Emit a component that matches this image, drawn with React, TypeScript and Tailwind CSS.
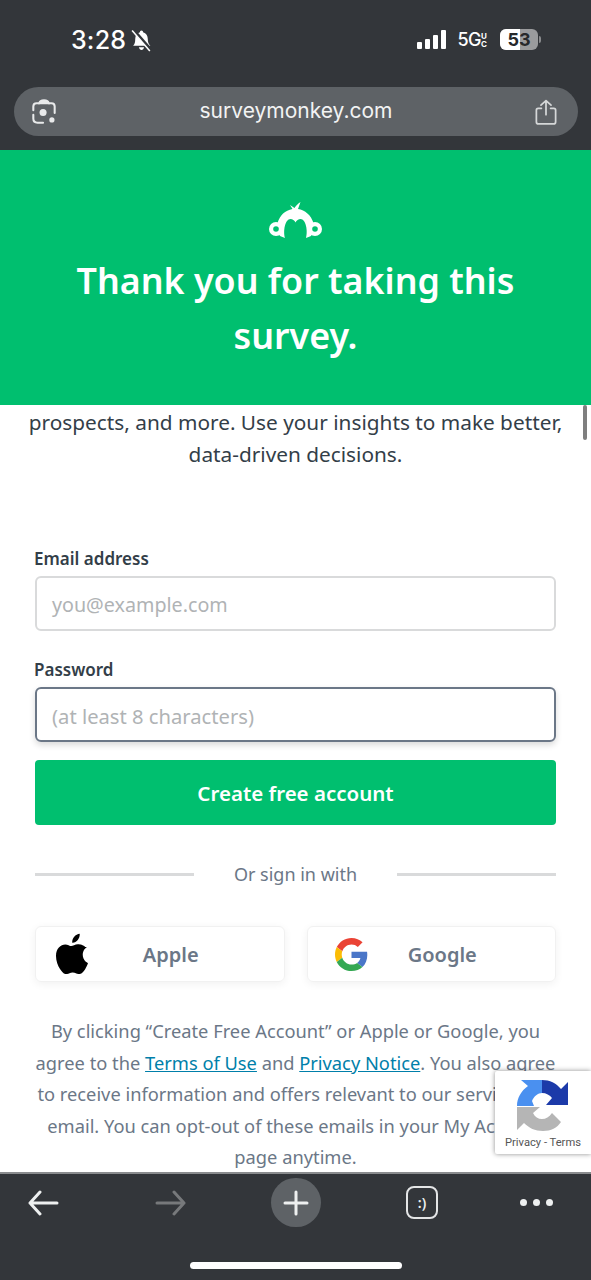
const font = { fontFamily: '"Noto Sans", sans-serif' };

function Monkey() {
  return (
    <svg width="54" height="36" viewBox="0 0 54 36" fill="white">
      <path d="M21 3 L25.500 6 C27 3.500 29 1.500 31.500 0 L29 7 C36 8 42 13 44.500 21 L46 27 L42 34 L37 36 C39 29 37 17 31.500 17 C29.500 17 27.500 18.500 26.500 20.500 C25.500 18.500 23.500 17 21.500 17 C16 17 14 29 16 36 L11 34 L7 27 L8.500 21 C11 13 16 8.500 23.500 7 Z" />
      <circle cx="7" cy="27" r="7" />
      <circle cx="46" cy="27" r="7" />
      <circle cx="7" cy="27" r="2.800" fill="#00bf6f" />
      <circle cx="46" cy="27" r="2.800" fill="#00bf6f" />
    </svg>
  );
}

function Apple() {
  return (
    <svg width="32" height="41" viewBox="0 0 814 1000" preserveAspectRatio="none" fill="black">
      <path d="M788 341c-6 4-108 62-108 190 0 149 130 201 134 203-1 3-21 72-69 143-43 62-88 124-156 124s-86-40-165-40c-77 0-104 41-166 41s-106-57-156-127C44 793 0 673 0 559c0-183 119-280 236-280 62 0 114 41 153 41 37 0 95-43 166-43 27 0 124 2 188 64zM554 170c29-35 50-83 50-131 0-7-1-13-2-19-48 2-104 32-138 71-27 30-52 78-52 127 0 7 1 15 2 17 3 1 8 1 13 1 43 0 97-29 127-66z" />
    </svg>
  );
}

function Google() {
  return (
    <svg width="33" height="33" viewBox="0 0 48 48">
      <path fill="#EA4335" d="M24 9.500c3.500 0 6.700 1.200 9.200 3.600l6.900-6.900C35.900 2.400 30.500 0 24 0 14.600 0 6.500 5.400 2.600 13.200l8 6.200C12.500 13.700 17.800 9.500 24 9.500z" />
      <path fill="#4A76C8" d="M46.980 24.550c0-1.570-.15-3.090-.38-4.550H24v9.020h12.940c-.58 2.960-2.260 5.480-4.780 7.180l7.730 6c4.510-4.180 7.090-10.360 7.090-17.650z" />
      <path fill="#FBBC05" d="M10.530 28.590c-.48-1.450-.76-2.990-.76-4.590s.27-3.140.76-4.590l-7.980-6.190C.92 16.460 0 20.120 0 24c0 3.880.92 7.540 2.560 10.780l7.970-6.190z" />
      <path fill="#34A853" d="M24 48c6.480 0 11.930-2.130 15.890-5.810l-7.730-6c-2.150 1.450-4.920 2.300-8.160 2.300-6.260 0-11.570-4.220-13.470-9.910l-7.980 6.190C6.510 42.620 14.620 48 24 48z" />
    </svg>
  );
}

function Recaptcha() {
  return (
    <svg width="52" height="52" viewBox="0 0 52 52" fill="none">
      <path d="M4 0 H25 V13 C21 13 17 16 15 21 L17 26 H0 C0 18 4 11 11 6 Z" fill="#4a90f0" />
      <path d="M25 0 C33 0 39 3 44 9 L51 2 V25 H29 L35 18 C33 15 29 13 25 13 Z" fill="#1c3aa9" />
      <path d="M0 27 V50 L7 43 C12 48 18 51 26 51 C34 51 40 48 44 42 L35 33 C32 37 29 39 25 39 C21 39 18 37 16 33 L23 27 Z" fill="#b5b5b5" />
    </svg>
  );
}

export default function App() {
  return (
    <div className="relative flex h-[1280px] w-[591px] flex-col overflow-hidden bg-white" style={font}>
      <header className="h-[150px] shrink-0 bg-[#33363a]">
        <div className="flex h-[87px] items-start justify-between pl-[71px] pr-[50px] pt-[24px] text-white">
          <div className="flex items-center gap-[5px]">
            <span className="text-[25px] font-medium leading-[32px] tracking-[0.2px]" style={{ fontFamily: 'Inter, sans-serif' }}>3:28</span>
            <svg width="21" height="23" viewBox="0 0 20 22" fill="white">
              <path d="M10 1.500c1 0 1.500.7 1.500 1.500 3 .8 4.500 3.500 4.500 6.500 0 3 .8 5 2.500 6.500H2c1.500-1.500 2-3.500 2-6.500 0-3 1.500-5.700 4.500-6.500 0-.8.5-1.500 1.500-1.500z" />
              <path d="M7.500 17.500h5c-.3 1.500-1.300 2.500-2.500 2.500s-2.200-1-2.500-2.500z" />
              <path d="M2 0.500 L19 20" stroke="#33363a" strokeWidth="3" />
              <path d="M1 1.500 L18 21" stroke="white" strokeWidth="1.500" />
            </svg>
          </div>
          <div className="flex items-center pt-[5px]">
            <div className="flex h-[19px] items-end gap-[3px]">
              <span className="h-[7px] w-[5px] rounded-[1px] bg-white" />
              <span className="h-[10px] w-[5px] rounded-[1px] bg-white" />
              <span className="h-[14px] w-[5px] rounded-[1px] bg-white" />
              <span className="h-[19px] w-[5px] rounded-[1px] bg-white" />
            </div>
            <span className="ml-[11px] text-[18px] font-medium leading-[20px] tracking-[-0.5px]" style={{ fontFamily: 'Inter, sans-serif' }}>5G</span>
            <span className="flex w-[7px] flex-col text-[8px] font-bold leading-[8px]" style={{ fontFamily: 'Inter, sans-serif' }}>
              <span>U</span>
              <span>C</span>
            </span>
            <span className="relative ml-[12px] flex h-[21px] w-[38px] items-center justify-center overflow-hidden rounded-[6px] bg-[#9a9b9d] text-[18px] font-bold text-[#26282b]" style={{ fontFamily: 'Inter, sans-serif' }}>
              <span className="absolute inset-y-0 left-0 w-[20px] bg-white" />
              <span className="relative">53</span>
            </span>
            <span className="ml-[1px] h-[7px] w-[2px] rounded-r-full bg-[#8a8b8d]" />
          </div>
        </div>
        <div className="ml-[14px] mr-[13px] flex h-[49px] items-center justify-between rounded-[25px] bg-[#5e6266] pl-[17px] pr-[21px] text-white">
          <svg width="26" height="26" viewBox="0 0 26 28" fill="none" stroke="#e9eaeb" strokeWidth="2.200" strokeLinecap="round">
            <path d="M8 4.500 H5 C2.500 4.500 1.500 6 1.500 8 V12" />
            <path d="M8 4.500 C8.500 2 10 1.500 13 1.500 C16 1.500 17.500 2 18 4.500 Z" fill="#e9eaeb" />
            <path d="M18 4.500 H21 C23.500 4.500 24.500 6 24.500 8 V15" />
            <path d="M1.500 17 V21 C1.500 24 3 25.500 6 25.500 H12" />
            <circle cx="12" cy="14.500" r="3.800" fill="#e9eaeb" stroke="none" />
            <circle cx="21.500" cy="22.500" r="2.800" fill="#e9eaeb" stroke="none" />
          </svg>
          <span className="mb-[2px] text-[21px] leading-[28px] text-[#f2f3f3]" style={{ fontFamily: 'Inter, sans-serif' }}>surveymonkey.com</span>
          <svg width="22" height="26" viewBox="0 0 24 28" fill="none" stroke="#d5d7d8" strokeWidth="1.900" strokeLinecap="round" strokeLinejoin="round">
            <path d="M12 17 V1.500 M6.500 6.500 L12 1.500 L17.500 6.500" />
            <path d="M7 10 H3.500 C2 10 1.500 11 1.500 12 V24.500 C1.500 26 2.500 27 3.500 27 H20.500 C22 27 22.500 26 22.500 24.500 V12 C22.500 11 22 10 20.500 10 H17" />
          </svg>
        </div>
      </header>

      <section className="flex h-[255px] shrink-0 flex-col items-center bg-[#00bf6f] pt-[52px] text-white">
        <Monkey />
        <h1 className="mt-[15px] w-[480px] text-center text-[35.800px] font-semibold leading-[55px]">Thank you for taking this survey.</h1>
      </section>

      <main className="min-h-0 flex-1 overflow-hidden">
        <p className="pt-[1px] text-center text-[20.800px] leading-[32px] text-[#333e48]">
          prospects, and more. Use your insights to make better,
          <br />
          data-driven decisions.
        </p>
        <form className="mt-[77px] flex flex-col px-[35px]">
          <label className="-ml-px text-[17px] font-semibold leading-[24px] text-[#333e48]">Email address</label>
          <div className="mt-[5px] flex h-[55px] items-center rounded-[6px] border-2 border-[#d9dadb] pl-[15px] pt-[3px] text-[19.700px] text-[#b0b3b5]">you@example.com</div>
          <label className="-ml-px mt-[27px] text-[17px] font-semibold leading-[24px] text-[#333e48]">Password</label>
          <div className="mt-[5px] flex h-[55px] items-center rounded-[6px] border-2 border-[#6b7787] pl-[15px] pt-[3px] text-[20.200px] text-[#b0b3b5] shadow-[0_3px_6px_rgba(0,0,0,0.15)]">(at least 8 characters)</div>
          <button type="button" className="mt-[18px] h-[65px] rounded-[4px] bg-[#00bf6f] pt-[1px] text-[20.500px] font-semibold text-white">Create free account</button>
          <div className="mt-[34px] flex items-center">
            <span className="h-[3px] w-[159px] bg-[#d9dadb]" />
            <span className="flex-1 text-center text-[18px] leading-[30px] text-[#6b7787]">Or sign in with</span>
            <span className="h-[3px] w-[159px] bg-[#d9dadb]" />
          </div>
          <div className="mt-[37px] flex gap-[22px]">
            <div className="relative flex h-[56px] flex-1 items-center justify-center rounded-[6px] border border-[#f1f1f1] pl-[22px] pt-[2px] text-[20px] font-semibold text-[#6b7787] shadow-[0_2px_8px_rgba(0,0,0,0.06)]">
              <span className="absolute left-[20px] top-[6px]"><Apple /></span>
              Apple
            </div>
            <div className="relative flex h-[56px] flex-1 items-center justify-center rounded-[6px] border border-[#f1f1f1] pl-[22px] pt-[2px] text-[20px] font-semibold text-[#6b7787] shadow-[0_2px_8px_rgba(0,0,0,0.06)]">
              <span className="absolute left-[27px] top-[11px]"><Google /></span>
              Google
            </div>
          </div>
        </form>
        <p className="mt-[33px] whitespace-nowrap text-center text-[18.300px] leading-[31.500px] text-[#6b7787]">
          By clicking “Create Free Account” or Apple or Google, you
          <br />
          agree to the <a className="text-[#007faa] underline">Terms of Use</a> and <a className="text-[#007faa] underline">Privacy Notice</a>. You also agree
          <br />
          to receive information and offers relevant to our services via
          <br />
          email. You can opt-out of these emails in your My Account
          <br />
          page anytime.
        </p>
      </main>

      <footer className="relative h-[108px] shrink-0 border-t-2 border-[#8a8c8e] bg-[#33363a]">
        <div className="flex items-center pl-[27px] pr-[38px] pt-[4px]">
          <svg width="32" height="26" viewBox="0 0 32 26" fill="none" stroke="#eef0f0" strokeWidth="3" strokeLinecap="round" strokeLinejoin="round">
            <path d="M30 13 H3 M13 2 L3 13 L13 24" />
          </svg>
          <svg className="ml-[96px]" width="32" height="26" viewBox="0 0 32 26" fill="none" stroke="#77797b" strokeWidth="3" strokeLinecap="round" strokeLinejoin="round">
            <path d="M2 13 H29 M19 2 L29 13 L19 24" />
          </svg>
          <div className="ml-[84px] flex h-[49px] w-[50px] items-center justify-center rounded-full bg-[#5e6266]">
            <svg width="26" height="26" viewBox="0 0 26 26" stroke="#eef0f0" strokeWidth="3" strokeLinecap="round"><path d="M13 2 V24 M2 13 H24" /></svg>
          </div>
          <div className="ml-[85px] flex h-[33px] w-[32px] items-center justify-center rounded-[8px] border-2 border-[#e4e5e6] text-[14px] font-semibold leading-none text-[#eef0f0]">:)</div>
          <div className="ml-auto flex gap-[6px]">
            <span className="h-[7px] w-[7px] rounded-full bg-[#eef0f0]" />
            <span className="h-[7px] w-[7px] rounded-full bg-[#eef0f0]" />
            <span className="h-[7px] w-[7px] rounded-full bg-[#eef0f0]" />
          </div>
        </div>
        <div className="absolute bottom-[11px] left-[190px] h-[7px] w-[212px] rounded-full bg-white" />
      </footer>

      <div className="absolute left-[583px] top-[405px] h-[35px] w-[4px] rounded-full bg-[#7f7f7f]" />

      <div className="absolute left-[495px] top-[1071px] flex h-[83px] w-[96px] flex-col items-center rounded-l-[2px] bg-white pt-[9px] shadow-[0_0_5px_rgba(0,0,0,0.45)]">
        <span className="ml-[-1px]"><Recaptcha /></span>
        <span className="mt-[4px] whitespace-nowrap text-[11.200px] leading-[14px] text-[#555555]" style={{ fontFamily: 'Roboto, sans-serif' }}>Privacy - Terms</span>
      </div>
    </div>
  );
}
